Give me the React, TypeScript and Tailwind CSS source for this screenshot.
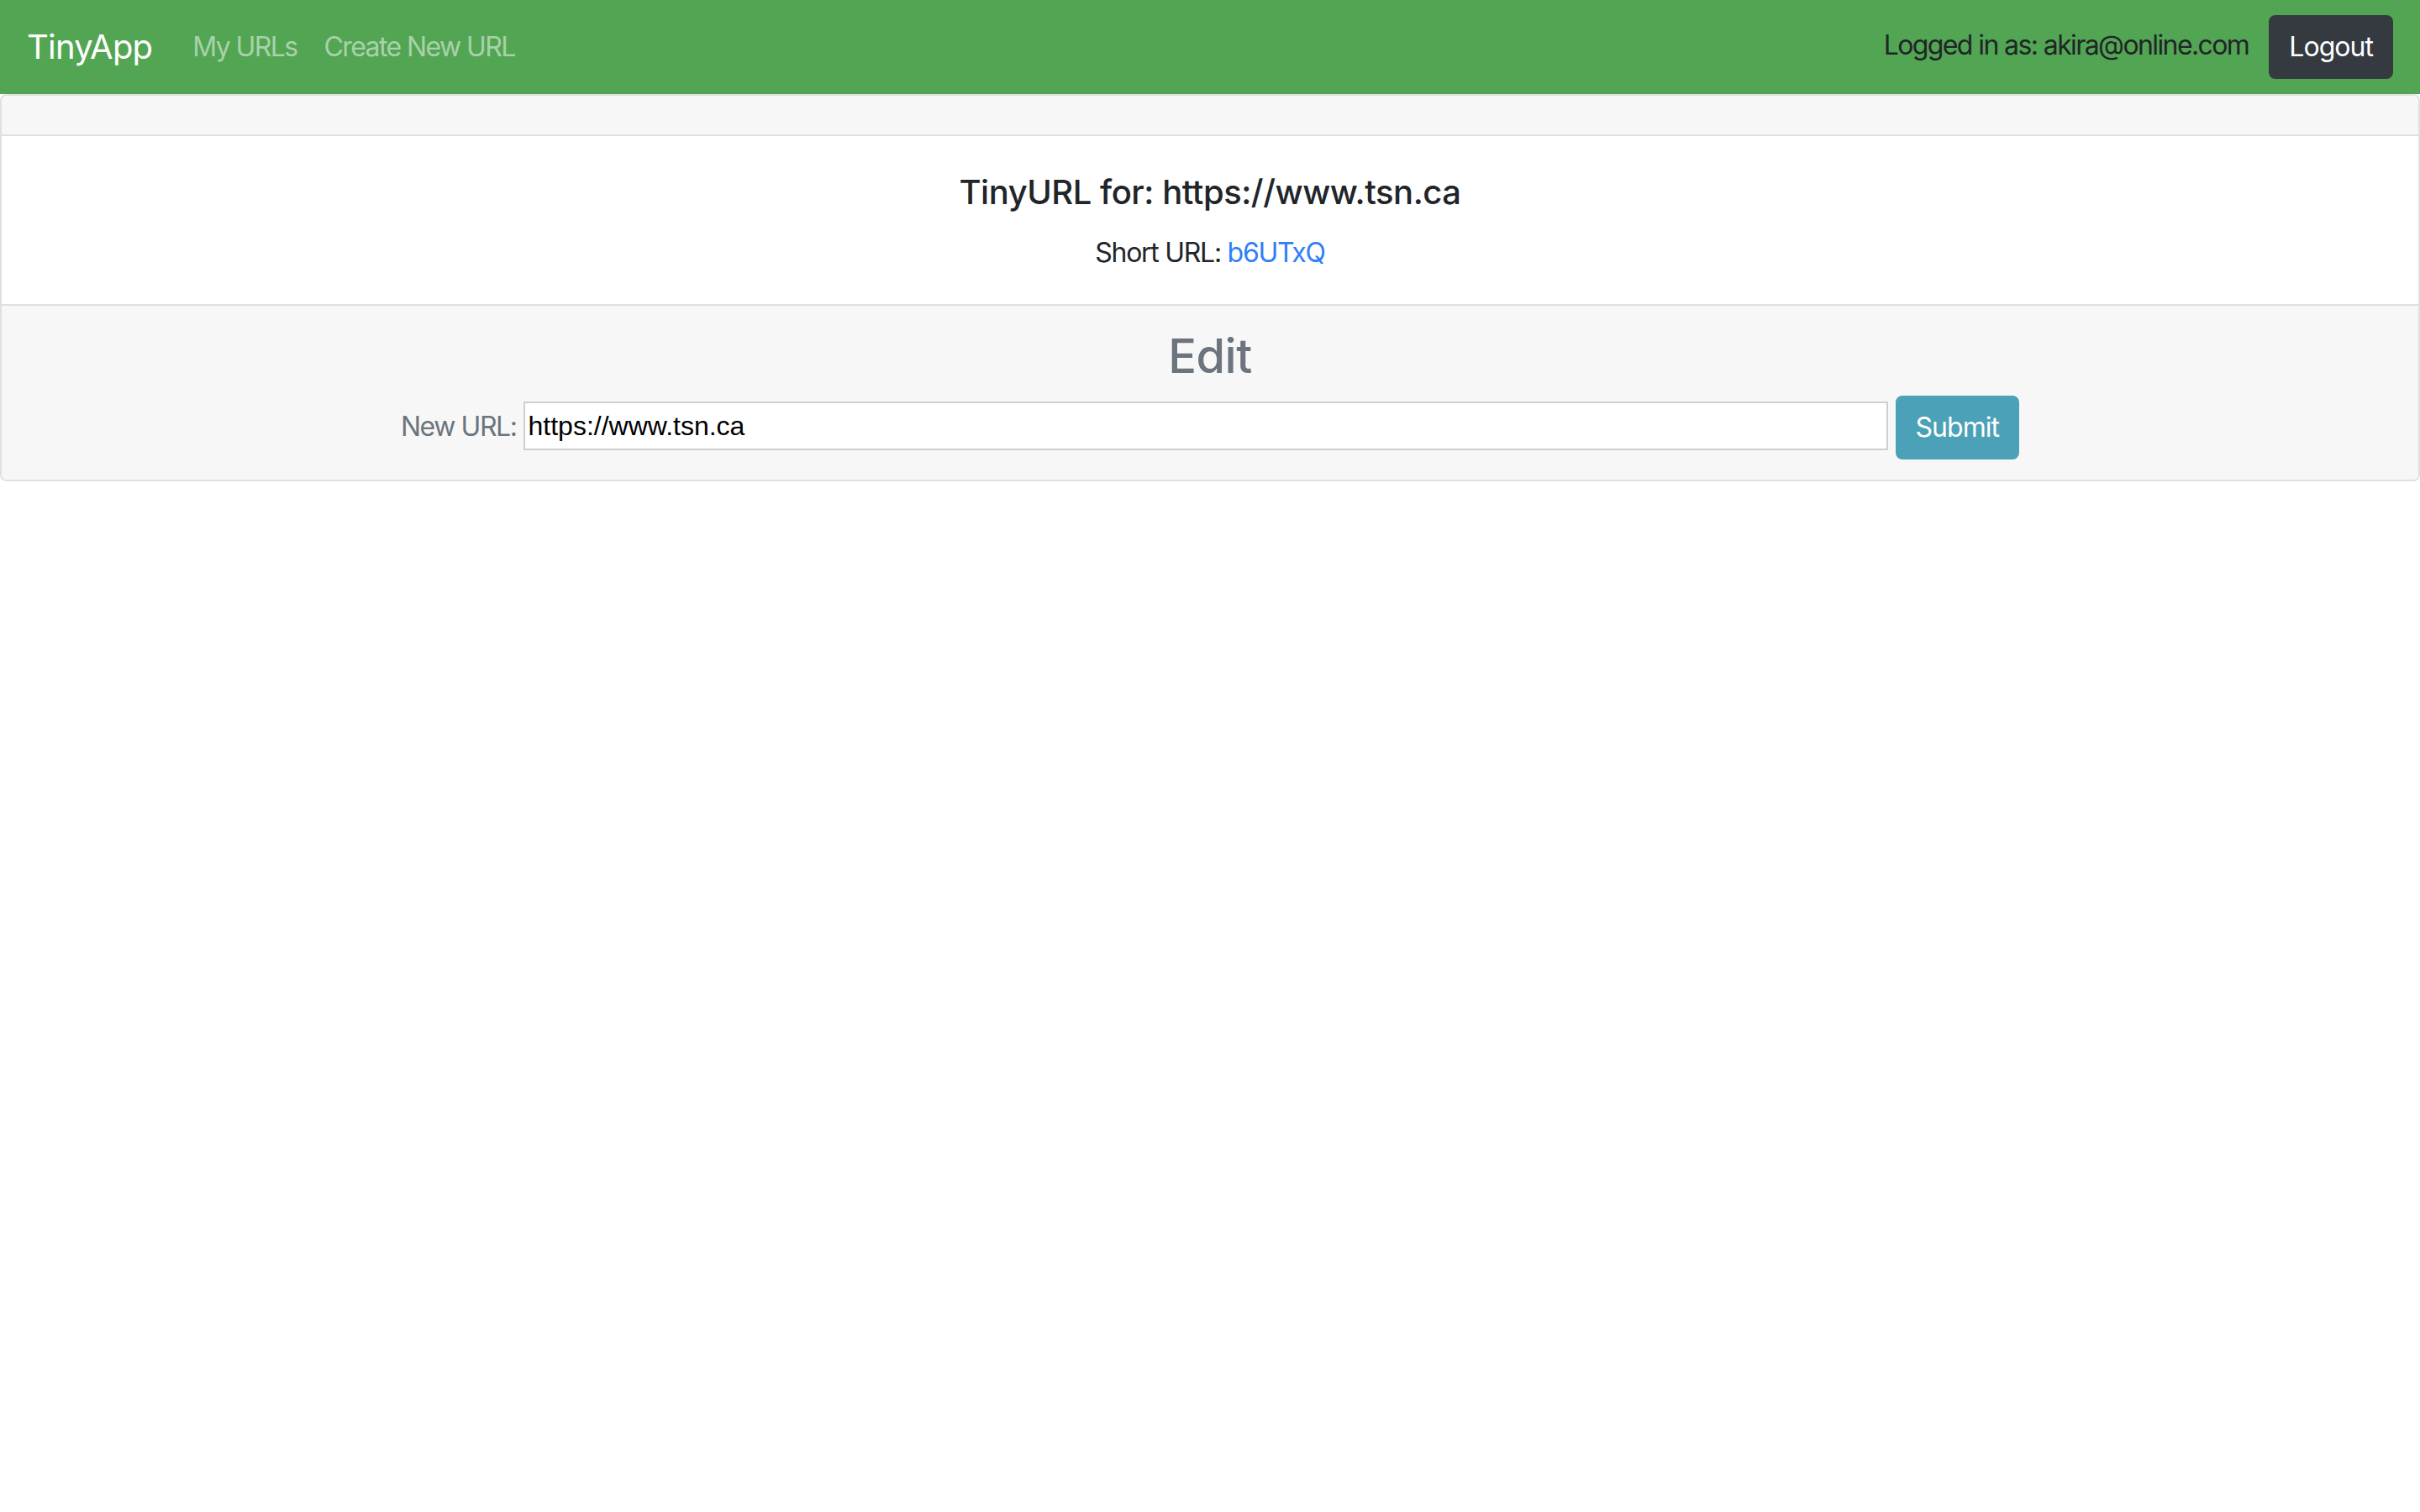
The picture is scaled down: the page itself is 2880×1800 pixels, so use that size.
import { useState } from 'react';

const links = ['My URLs', 'Create New URL'];

function Navbar() {
  return (
    <nav className="flex h-[112px] items-center justify-between bg-[#52a552] px-8">
      <div className="flex items-center">
        <a href="#" className="mr-8 text-[40px] leading-[1.5] tracking-[-0.02em] text-white">
          TinyApp
        </a>
        <ul className="flex">
          {links.map((label) => (
            <li key={label}>
              <a href="#" className="px-4 text-[32px] leading-[1.5] tracking-[-0.05em] text-white/50">
                {label}
              </a>
            </li>
          ))}
        </ul>
      </div>
      <div className="flex items-center">
        <span className="mr-6 -translate-y-[2px] text-[32px] leading-[1.5] tracking-[-0.05em] text-[#212529]">
          Logged in as: akira@online.com
        </span>
        <button className="h-[76px] rounded-lg bg-[#343a40] px-6 text-[32px] leading-[1.5] tracking-[-0.03em] text-white">
          Logout
        </button>
      </div>
    </nav>
  );
}

export default function App() {
  const [longURL, setLongURL] = useState('https://www.tsn.ca');

  return (
    <div className="min-h-screen bg-white font-[Inter,'Noto_Sans',sans-serif] text-[#212529]">
      <Navbar />
      <div className="rounded-lg border-2 border-[#e0e0e0] text-center">
        <div className="h-[48px] rounded-t-lg border-b-2 border-[#e0e0e0] bg-[#f7f7f7]" />
        <div className="px-10 pt-[43px] pb-[37px]">
          <h5 className="mb-6 text-[40px] leading-[1.2] font-medium tracking-[-0.012em]">
            TinyURL for: {longURL}
          </h5>
          <p className="text-[32px] leading-[1.5] tracking-[-0.04em]">
            Short URL:{' '}
            <a href="#" className="text-[#2f7ff7]">
              b6UTxQ
            </a>
          </p>
        </div>
        <div className="rounded-b-lg border-t-2 border-[#e0e0e0] bg-[#f7f7f7] px-10 py-6">
          <h3 className="mt-[3px] mb-[13px] text-[56px] leading-[1.2] font-medium tracking-[-0.01em] text-[#6c757d]">
            Edit
          </h3>
          <form
            className="flex items-center justify-center"
            onSubmit={(e) => e.preventDefault()}
          >
            <label className="mr-2 mb-[2px] text-[32px] leading-[1.5] tracking-[-0.045em] text-[#6c757d]">
              New URL:
            </label>
            <input
              type="text"
              value={longURL}
              onChange={(e) => setLongURL(e.target.value)}
              className="mb-[4px] h-[58px] w-[1624px] border-2 border-[#cfcfcf] bg-white px-1 font-['Liberation_Sans',Arial,sans-serif] text-[32px] text-black outline-none"
            />
            <button
              type="submit"
              className="ml-[9px] h-[76px] rounded-lg bg-[#4ba1b7] px-6 text-[32px] leading-[1.5] tracking-[-0.03em] text-white"
            >
              Submit
            </button>
          </form>
        </div>
      </div>
    </div>
  );
}
